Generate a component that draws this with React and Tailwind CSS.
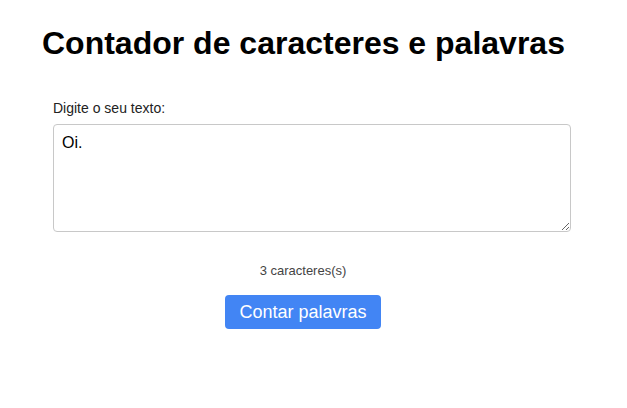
export default function App() {
  return (
    <div className="w-[627px] h-[408px] bg-white" style={{ fontFamily: '"Liberation Sans", Arial, sans-serif' }}>
      <h1 className="pl-[42px] pt-[23px] text-[32px] font-bold leading-[40px] text-black">Contador de caracteres e palavras</h1>
      <div className="pl-[53px] pt-[37px]">
        <label className="block text-[14px] leading-[16px] text-[#222]">Digite o seu texto:</label>
        <textarea
          defaultValue="Oi."
          className="mt-[8px] block w-[518px] h-[108px] rounded-[4px] border border-[#c8c8c8] px-[8px] py-[8px] text-[16px] leading-[20px] text-black outline-none"
          style={{ fontFamily: '"Liberation Sans", Arial, sans-serif' }}
        />
      </div>
      <div className="w-[606px] flex flex-col items-center pt-[31px]">
        <p className="text-[13px] leading-[16px] text-[#444]">3 caracteres(s)</p>
        <button className="mt-[16px] w-[156px] h-[34px] rounded-[4px] bg-[#4285f4] text-white text-[18px] leading-[22px]">Contar palavras</button>
      </div>
    </div>
  );
}
